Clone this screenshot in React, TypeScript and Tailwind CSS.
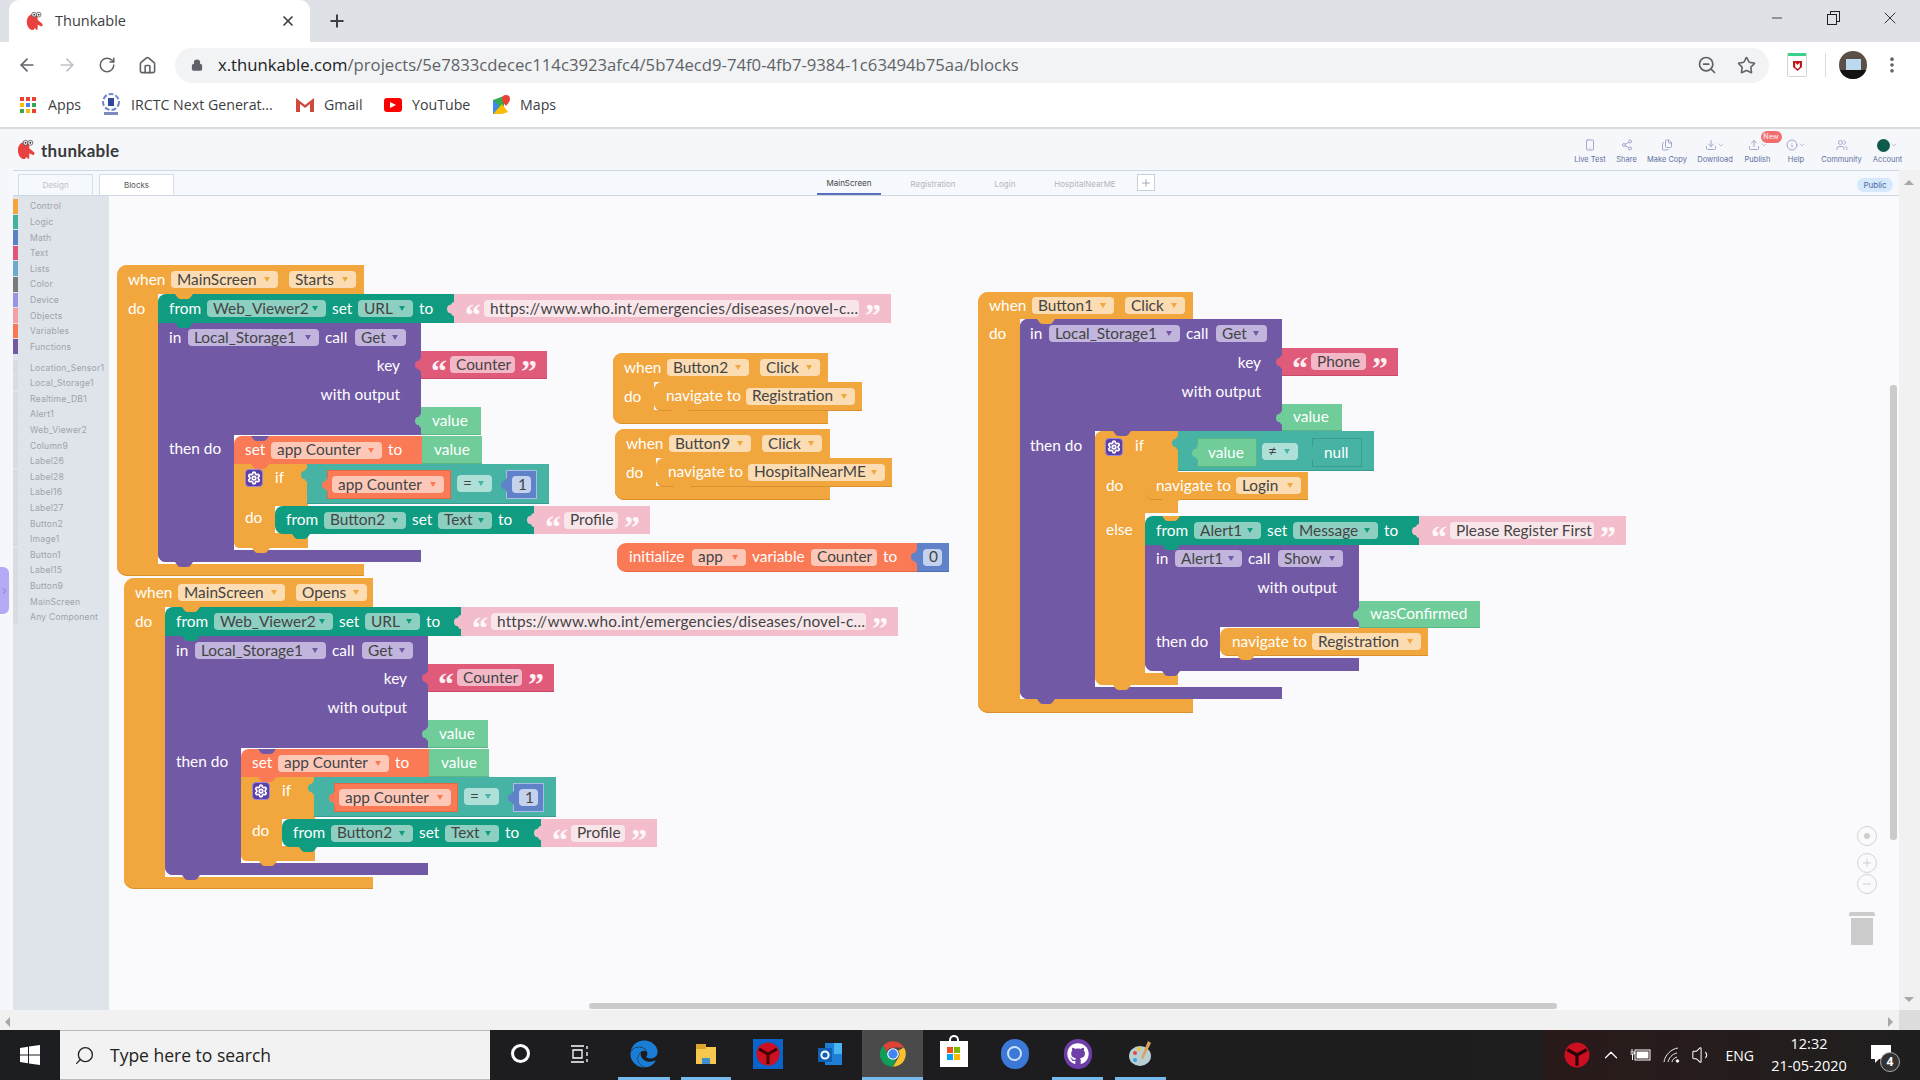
import React from "react";
import { ArrowLeft, ArrowRight, RotateCw, Home, Lock, ZoomOut, Star, X, Plus, MoreVertical, Minus, Settings, Search, ChevronUp, ChevronDown, ChevronRight, Volume1, Share2, Files, Download, Upload, Info, Users, Smartphone } from "lucide-react";
import { FaEdge, FaGithub } from "react-icons/fa";

const OR = "bg-[#f2a73e]";
const TE = "bg-[#0f9c80]";
const CO = "bg-[#46b3a5]";
const PU = "bg-[#7259a5]";
const RE = "bg-[#f97a55]";
const PK = "bg-[#f3bdcb]";
const KE = "bg-[#e05a7a]";
const GR = "bg-[#70cd9a]";
const BL = "bg-[#5f82c9]";

const tones: Record<string, { bg: string; ar: string }> = {
  orange: { bg: "bg-[#fbdcb3]", ar: "border-t-[#f2a73e]" },
  teal: { bg: "bg-[#8dd0c1]", ar: "border-t-[#0f9c80]" },
  purple: { bg: "bg-[#c1b5de]", ar: "border-t-[#7259a5]" },
  red: { bg: "bg-[#fdc8b8]", ar: "border-t-[#f97a55]" },
  lteal: { bg: "bg-[#aee0d8]", ar: "border-t-[#46b3a5]" },
  pink: { bg: "bg-[#f9e6eb]", ar: "" },
  key: { bg: "bg-[#f3b8c8]", ar: "" },
  blue: { bg: "bg-[#c5d2ee]", ar: "" },
};

const B = ({ className, children }: { className: string; children?: React.ReactNode }) => (
  <div className={`absolute flex items-center gap-[6px] whitespace-nowrap ${className}`}>{children}</div>
);
const T = ({ w, children }: { w: string; children: React.ReactNode }) => <span className={`shrink-0 ${w}`}>{children}</span>;
const L = ({ className, children }: { className: string; children: React.ReactNode }) => (
  <div className={`absolute flex h-[29px] items-center whitespace-nowrap text-white ${className}`}>{children}</div>
);
const F = ({ w, tone, children, arrow = true, extra = "" }: { w: string; tone: string; children: React.ReactNode; arrow?: boolean; extra?: string }) => (
  <span className={`flex h-[17px] shrink-0 items-center justify-between rounded-[4px] pl-[6px] pr-[8px] leading-none text-[#444] ${w} ${tones[tone].bg} ${extra}`}>
    <span>{children}</span>
    {arrow && <i className={`h-0 w-0 border-x-[3px] border-t-[5px] border-x-transparent ${tones[tone].ar}`} />}
  </span>
);
const Q = ({ c }: { c: string }) => (
  <span className="h-[17px] w-[13px] shrink-0 font-['Liberation_Serif',serif] text-[32px] font-bold leading-[30px] text-white/90">{c}</span>
);
const Tab = ({ className }: { className: string }) => (
  <svg viewBox="0 0 7 14" className={`absolute h-[14px] w-[7px] fill-current ${className}`}>
    <path d="M7 0C4 0 5 3 3 3 1 3 0 5 0 7s1 4 3 4c2 0 1 3 4 3Z" />
  </svg>
);
const Bump = ({ className }: { className: string }) => (
  <svg viewBox="0 0 18 5" className={`absolute z-10 h-[5px] w-[18px] fill-current ${className}`}>
    <path d="M0 0 3 4Q4 5 6 5H12Q14 5 15 4L18 0Z" />
  </svg>
);
const Gear = ({ className }: { className: string }) => (
  <div className={`absolute flex h-[18px] w-[18px] items-center justify-center rounded-[4px] border border-[#9a86d8] bg-[#5a3fa8] text-white ${className}`}>
    <Settings size={14} strokeWidth={3} />
  </div>
);
const Tri = ({ s, stroke }: { s: number; stroke: string }) => (
  <svg width={s} height={s} viewBox="0 0 24 24">
    <circle cx="12" cy="12" r="11.5" fill="#cc1021" />
    <path d="M12 12 3 7M12 12l9-5M12 12v10" stroke={stroke} strokeWidth="3" fill="none" />
  </svg>
);
const RL = "mt-[1px] leading-[17px]";

function FromURL() {
  return (
    <>
      <B className={`left-[337px] top-[29px] h-[29px] w-[437px] pl-[11px] ${PK}`}>
        <Q c="“" />
        <F w="w-[375px]" tone="pink" arrow={false} extra="tracking-[0.16px]">https://www.who.int/emergencies/diseases/novel-c…</F>
        <Q c="”" />
      </B>
      <B className={`left-[41px] top-[29px] h-[29px] w-[296px] rounded-tl-[8px] pl-[11px] text-white ${TE}`}>
        <T w="w-[32px]">from</T>
        <F w="w-[119px]" tone="teal">Web_Viewer2</F>
        <T w="w-[20px]">set</T>
        <F w="w-[55px]" tone="teal">URL</F>
        <T w="w-[20px]">to</T>
        <Tab className="right-0 top-[8px] text-[#f3bdcb]" />
        <Bump className="left-[17px] top-0 text-[#f2a73e]" />
        <Bump className="left-[17px] -bottom-[5px] text-[#0f9c80]" />
      </B>
    </>
  );
}

function MainBlock({ pos, hw, evt, ew }: { pos: string; hw: string; evt: string; ew: string }) {
  return (
    <div className={`absolute h-[311px] w-[780px] ${pos}`}>
      <div className={`absolute left-0 top-0 h-[311px] w-[41px] rounded-l-[10px] ${OR}`} />
      <B className={`left-0 top-0 h-[29px] rounded-tl-[10px] pl-[11px] text-white ${hw} ${OR}`}>
        <T w="w-[37px]">when</T>
        <F w="w-[107px]" tone="orange">MainScreen</F>
        <F w={ew} tone="orange" extra="ml-[5px]">{evt}</F>
      </B>
      <div className={`absolute left-0 top-[299px] h-[12px] rounded-bl-[10px] border-b border-[#d9902e] ${hw} ${OR}`} />
      <L className="left-[11px] top-[29px]">do</L>

      <div className={`absolute left-[41px] top-[58px] h-[239px] w-[76px] rounded-bl-[8px] ${PU}`} />
      <B className={`left-[41px] top-[58px] h-[112px] w-[263px] items-start pl-[11px] pt-[5px] text-white ${PU}`}>
        <T w={`w-[13px] ${RL}`}>in</T>
        <F w="w-[131px]" tone="purple" extra="mt-[1px]">Local_Storage1</F>
        <T w={`w-[24px] ${RL}`}>call</T>
        <F w="w-[51px]" tone="purple" extra="mt-[1px]">Get</F>
      </B>
      <div className={`absolute left-[41px] top-[285px] h-[12px] w-[263px] rounded-bl-[8px] ${PU}`} />
      <Bump className="left-[58px] top-[297px] text-[#7259a5]" />
      <L className="left-[41px] top-[86px] w-[242px] justify-end">key</L>
      <L className="left-[41px] top-[115px] w-[242px] justify-end">with output</L>
      <L className="left-[52px] top-[169px]">then do</L>
      <FromURL />

      <B className={`left-[304px] top-[86px] h-[28px] w-[126px] border-b border-[#c94a68] pl-[10px] ${KE}`}>
        <Tab className="-left-[6px] top-[7px] text-[#e05a7a]" />
        <Q c="“" />
        <F w="w-[65px]" tone="key" arrow={false}>Counter</F>
        <Q c="”" />
      </B>
      <B className={`left-[304px] top-[142px] h-[28px] w-[60px] border-b border-[#5cb584] pl-[11px] text-white ${GR}`}>
        <Tab className="-left-[6px] top-[7px] text-[#70cd9a]" />
        value
      </B>
      <B className={`left-[305px] top-[171px] h-[28px] w-[60px] border-b border-[#5cb584] pl-[12px] text-white ${GR}`}>
        <Tab className="-left-[6px] top-[7px] text-[#70cd9a]" />
        value
      </B>

      <div className={`absolute left-[117px] top-[198px] h-[85px] w-[41px] rounded-bl-[6px] ${OR}`} />
      <div className={`absolute left-[117px] top-[198px] h-[43px] w-[74px] ${OR}`} />
      <div className={`absolute left-[117px] top-[268px] h-[15px] w-[74px] rounded-bl-[6px] ${OR}`} />
      <Bump className="left-[135px] top-[283px] text-[#f2a73e]" />
      <B className={`left-[117px] top-[171px] h-[28px] w-[188px] rounded-tl-[8px] pl-[11px] text-white ${RE}`}>
        <T w="w-[20px]">set</T>
        <F w="w-[111px]" tone="red">app Counter</F>
        <T w="w-[20px]">to</T>
        <Bump className="left-[17px] top-0 text-[#7259a5]" />
        <Bump className="left-[17px] -bottom-[5px] text-[#f97a55]" />
      </B>
      <Gear className="left-[128px] top-[204px]" />
      <L className="left-[158px] top-[198px]">if</L>
      <L className="left-[128px] top-[238px]">do</L>

      <div className={`absolute left-[190px] top-[199px] h-[40px] w-[242px] border-b border-[#3a9c90] ${CO}`}>
        <Tab className="-left-[6px] top-[4px] text-[#46b3a5]" />
      </div>
      <B className={`left-[210px] top-[205px] h-[29px] w-[124px] border border-[#e2683f] pl-[4px] ${RE}`}>
        <Tab className="-left-[6px] top-[7px] text-[#f97a55]" />
        <F w="w-[112px]" tone="red">app Counter</F>
      </B>
      <B className="left-[340px] top-[210px] h-[17px]">
        <F w="w-[35px]" tone="lteal">=</F>
      </B>
      <B className={`left-[389px] top-[205px] h-[29px] w-[31px] border border-[#a8bce4] pl-[5px] ${BL}`}>
        <Tab className="-left-[6px] top-[7px] text-[#5f82c9]" />
        <F w="w-[19px]" tone="blue" arrow={false}>1</F>
      </B>

      <B className={`left-[417px] top-[241px] h-[28px] w-[116px] pl-[11px] ${PK}`}>
        <Q c="“" />
        <F w="w-[54px]" tone="pink" arrow={false}>Profile</F>
        <Q c="”" />
      </B>
      <B className={`left-[158px] top-[241px] h-[28px] w-[259px] rounded-l-[8px] pl-[11px] text-white ${TE}`}>
        <T w="w-[32px]">from</T>
        <F w="w-[82px]" tone="teal">Button2</F>
        <T w="w-[20px]">set</T>
        <F w="w-[54px]" tone="teal">Text</F>
        <T w="w-[20px]">to</T>
        <Tab className="right-0 top-[7px] text-[#f3bdcb]" />
        <Bump className="left-[17px] -bottom-[5px] text-[#0f9c80]" />
      </B>
    </div>
  );
}

function NavBlock({ pos, btn, pw, page, nw, bp, cp }: { pos: string; btn: string; pw: string; page: string; nw: string; bp: string; cp: string }) {
  return (
    <div className={`absolute h-[71px] w-[300px] ${pos}`}>
      <div className={`absolute left-0 top-0 h-[71px] w-[41px] rounded-l-[9px] ${OR}`} />
      <B className={`left-0 top-0 h-[29px] w-[215px] rounded-tl-[9px] pl-[11px] text-white ${OR}`}>
        <T w="w-[37px]">when</T>
        <F w={bp} tone="orange">{btn}</F>
        <F w={cp} tone="orange" extra="ml-[5px]">Click</F>
      </B>
      <L className="left-[11px] top-[29px]">do</L>
      <div className={`absolute left-0 top-[57px] h-[14px] w-[215px] rounded-bl-[9px] border-b border-[#d9902e] ${OR}`} />
      <B className={`left-[41px] top-[29px] h-[29px] rounded-l-[8px] border-b border-[#d9902e] pl-[12px] text-white ${nw} ${OR}`}>
        <T w="w-[74px]">navigate to</T>
        <F w={pw} tone="orange">{page}</F>
        <Bump className="left-[17px] -bottom-[5px] text-[#f2a73e]" />
      </B>
    </div>
  );
}

function ButtonOne() {
  return (
    <div className="absolute left-[869px] top-[96px] h-[421px] w-[650px]">
      <div className={`absolute left-0 top-0 h-[421px] w-[42px] rounded-l-[10px] ${OR}`} />
      <B className={`left-0 top-0 h-[27px] w-[215px] rounded-tl-[10px] pl-[11px] text-white ${OR}`}>
        <T w="w-[37px]">when</T>
        <F w="w-[82px]" tone="orange">Button1</F>
        <F w="w-[60px]" tone="orange" extra="ml-[5px]">Click</F>
      </B>
      <div className={`absolute left-0 top-[407px] h-[14px] w-[215px] rounded-bl-[10px] border-b border-[#d9902e] ${OR}`} />
      <L className="left-[11px] top-[27px]">do</L>

      <div className={`absolute left-[42px] top-[27px] h-[380px] w-[75px] rounded-l-[8px] ${PU}`} />
      <B className={`left-[42px] top-[27px] h-[112px] w-[262px] items-start rounded-tl-[8px] pl-[10px] pt-[5px] text-white ${PU}`}>
        <T w={`w-[13px] ${RL}`}>in</T>
        <F w="w-[131px]" tone="purple" extra="mt-[1px]">Local_Storage1</F>
        <T w={`w-[24px] ${RL}`}>call</T>
        <F w="w-[51px]" tone="purple" extra="mt-[1px]">Get</F>
        <Bump className="left-[17px] top-0 text-[#f2a73e]" />
      </B>
      <div className={`absolute left-[42px] top-[395px] h-[12px] w-[262px] rounded-bl-[8px] ${PU}`} />
      <Bump className="left-[59px] top-[407px] text-[#7259a5]" />
      <L className="left-[42px] top-[56px] w-[241px] justify-end">key</L>
      <L className="left-[42px] top-[85px] w-[241px] justify-end">with output</L>
      <L className="left-[52px] top-[139px]">then do</L>

      <B className={`left-[304px] top-[56px] h-[28px] w-[116px] border-b border-[#c94a68] pl-[10px] ${KE}`}>
        <Tab className="-left-[6px] top-[7px] text-[#e05a7a]" />
        <Q c="“" />
        <F w="w-[55px]" tone="key" arrow={false}>Phone</F>
        <Q c="”" />
      </B>
      <B className={`left-[304px] top-[112px] h-[27px] w-[60px] border-b border-[#5cb584] pl-[11px] text-white ${GR}`}>
        <Tab className="-left-[6px] top-[7px] text-[#70cd9a]" />
        value
      </B>

      <div className={`absolute left-[117px] top-[139px] h-[254px] w-[50px] rounded-l-[8px] ${OR}`} />
      <div className={`absolute left-[117px] top-[139px] h-[82px] w-[83px] rounded-tl-[8px] ${OR}`} />
      <div className={`absolute left-[117px] top-[381px] h-[12px] w-[83px] rounded-bl-[8px] ${OR}`} />
      <Bump className="left-[135px] top-[139px] text-[#7259a5]" />
      <Bump className="left-[135px] top-[393px] text-[#f2a73e]" />
      <Gear className="left-[127px] top-[146px]" />
      <L className="left-[157px] top-[139px]">if</L>
      <L className="left-[128px] top-[179px]">do</L>
      <L className="left-[128px] top-[223px]">else</L>

      <div className={`absolute left-[200px] top-[139px] h-[40px] w-[196px] border-b border-[#3a9c90] ${CO}`}>
        <Tab className="-left-[6px] top-[5px] text-[#46b3a5]" />
      </div>
      <B className={`left-[219px] top-[146px] h-[29px] w-[60px] border border-[#5cb584] pl-[10px] text-white ${GR}`}>
        <Tab className="-left-[6px] top-[7px] text-[#70cd9a]" />
        value
      </B>
      <B className="left-[284px] top-[151px] h-[17px]">
        <F w="w-[36px]" tone="lteal">≠</F>
      </B>
      <B className={`left-[334px] top-[146px] h-[29px] w-[50px] border border-[#3a9c90] pl-[11px] text-white ${CO}`}>
        <Tab className="-left-[6px] top-[7px] text-[#46b3a5]" />
        null
      </B>

      <B className={`left-[167px] top-[180px] h-[28px] w-[163px] rounded-l-[8px] border-b border-[#d9902e] pl-[11px] text-white ${OR}`}>
        <T w="w-[74px]">navigate to</T>
        <F w="w-[65px]" tone="orange">Login</F>
        <Bump className="left-[17px] -bottom-[5px] text-[#f2a73e]" />
      </B>

      <div className={`absolute left-[167px] top-[253px] h-[126px] w-[75px] rounded-bl-[8px] ${PU}`} />
      <B className={`left-[167px] top-[253px] h-[82px] w-[214px] items-start pl-[11px] pt-[4px] text-white ${PU}`}>
        <T w={`w-[13px] ${RL}`}>in</T>
        <F w="w-[67px]" tone="purple" extra="mt-[1px]">Alert1</F>
        <T w={`w-[24px] ${RL}`}>call</T>
        <F w="w-[65px]" tone="purple" extra="mt-[1px]">Show</F>
      </B>
      <div className={`absolute left-[167px] top-[366px] h-[13px] w-[214px] rounded-bl-[8px] ${PU}`} />
      <Bump className="left-[184px] top-[379px] text-[#7259a5]" />
      <L className="left-[167px] top-[281px] w-[192px] justify-end">with output</L>
      <L className="left-[178px] top-[335px]">then do</L>

      <B className={`left-[441px] top-[224px] h-[29px] w-[207px] pl-[12px] ${PK}`}>
        <Q c="“" />
        <F w="w-[144px]" tone="pink" arrow={false}>Please Register First</F>
        <Q c="”" />
      </B>
      <B className={`left-[167px] top-[224px] h-[29px] w-[274px] rounded-tl-[8px] pl-[11px] text-white ${TE}`}>
        <T w="w-[32px]">from</T>
        <F w="w-[67px]" tone="teal">Alert1</F>
        <T w="w-[20px]">set</T>
        <F w="w-[85px]" tone="teal">Message</F>
        <T w="w-[20px]">to</T>
        <Tab className="right-0 top-[8px] text-[#f3bdcb]" />
        <Bump className="left-[17px] top-0 text-[#f2a73e]" />
        <Bump className="left-[17px] -bottom-[5px] text-[#0f9c80]" />
      </B>
      <B className={`left-[381px] top-[309px] h-[27px] w-[121px] border-b border-[#5cb584] pl-[11px] text-white ${GR}`}>
        <Tab className="-left-[6px] top-[7px] text-[#70cd9a]" />
        wasConfirmed
      </B>
      <B className={`left-[242px] top-[336px] h-[28px] w-[208px] rounded-l-[8px] border-b border-[#d9902e] pl-[12px] text-white ${OR}`}>
        <T w="w-[74px]">navigate to</T>
        <F w="w-[109px]" tone="orange">Registration</F>
        <Bump className="left-[17px] -bottom-[5px] text-[#f2a73e]" />
      </B>
    </div>
  );
}

const cats: [string, string][] = [
  ["Control", "bg-[#f2a63b]"], ["Logic", "bg-[#3fb39d]"], ["Math", "bg-[#5b80c6]"], ["Text", "bg-[#e0567a]"], ["Lists", "bg-[#6cacc8]"],
  ["Color", "bg-[#7a7a7a]"], ["Device", "bg-[#9a94e6]"], ["Objects", "bg-[#f59fa4]"], ["Variables", "bg-[#fa7850]"], ["Functions", "bg-[#7358a4]"],
];
const comps = ["Location_Sensor1", "Local_Storage1", "Realtime_DB1", "Alert1", "Web_Viewer2", "Column9", "Label26", "Label28", "Label16", "Label27", "Button2", "Image1", "Button1", "Label15", "Button9", "MainScreen", "Any Component"];

function Side() {
  const row = (name: string, sw: string) => (
    <div key={name} className="flex h-[15.6px] items-center">
      <div className={`mb-[1px] h-[14.5px] w-[5px] ${sw}`} />
      <span className="ml-[12px] text-[8.6px] tracking-[0.2px] text-[#9ea3ab]">{name}</span>
    </div>
  );
  return (
    <aside className="w-[96px] shrink-0 bg-[#dfe3ea] pt-[3px] font-['Inter',sans-serif]">
      {cats.map(([n, c]) => row(n, c))}
      <div className="h-[5.4px]" />
      {comps.map((n) => row(n, "bg-[#d8dbdf]"))}
    </aside>
  );
}

const Logo = ({ s }: { s: number }) => (
  <svg width={s} height={s} viewBox="0 0 20 22">
    <path d="M9 3C4 3 1 7 1 12s3 9 7 9c1 0 1-2 2-2s1 2 2 2 1-3 1-6l4 2c1 0 2-2 1-3l-5-4c0-4-1-7-4-7Z" fill="#e8423f" />
    <circle cx="9" cy="4" r="2.6" fill="#fff" stroke="#444" strokeWidth="0.8" />
    <circle cx="14" cy="4" r="2.6" fill="#fff" stroke="#444" strokeWidth="0.8" />
    <circle cx="9" cy="4" r="1" fill="#333" />
    <circle cx="14" cy="4" r="1" fill="#333" />
  </svg>
);

function ChromeIcon({ s }: { s: number }) {
  return (
    <svg width={s} height={s} viewBox="0 0 24 24">
      <path d="M12 1a11 11 0 0 1 9.5 5.5H12a5.5 5.5 0 0 0-5.2 3.7L3.6 4.7A11 11 0 0 1 12 1Z" fill="#db4437" />
      <path d="M21.5 6.5A11 11 0 0 1 12 23l4.8-8.2A5.5 5.5 0 0 0 16.6 9Z" fill="#fbc02d" />
      <path d="M12 23A11 11 0 0 1 3.6 4.7l4.7 8.5a5.5 5.5 0 0 0 6.4 3.2Z" fill="#0f9d58" />
      <circle cx="12" cy="12" r="5" fill="#fff" />
      <circle cx="12" cy="12" r="4" fill="#4285f4" />
    </svg>
  );
}

function TabBar() {
  return (
    <div className="flex h-[42px] items-end bg-[#dee1e6]">
      <div className="ml-[9px] flex h-[42px] w-[301px] items-center rounded-t-[10px] bg-white pl-[16px] pr-[14px] text-[#3c4043]">
        <Logo s={20} />
        <span className="ml-[10px] flex-1 text-[14.5px]">Thunkable</span>
        <X size={16} strokeWidth={2.6} className="text-[#3c4043]" />
      </div>
      <div className="ml-[17px] flex h-[42px] w-[20px] items-center justify-center text-[#3c4043]">
        <Plus size={20} strokeWidth={2.4} />
      </div>
      <div className="ml-auto flex h-[36px] items-center self-start text-[#222]">
        <div className="flex w-[56px] justify-center"><Minus size={16} strokeWidth={1.2} /></div>
        <div className="relative flex w-[56px] justify-center">
          <div className="relative h-[14px] w-[13px]">
            <div className="absolute right-0 top-0 h-[11px] w-[10px] border border-[#222]" />
            <div className="absolute bottom-0 left-0 h-[11px] w-[10px] border border-[#222] bg-[#dee1e6]" />
          </div>
        </div>
        <div className="mr-[1px] flex w-[58px] justify-center"><X size={20} strokeWidth={1.1} /></div>
      </div>
    </div>
  );
}

function Toolbar() {
  return (
    <div className="flex h-[46px] items-center bg-white pl-[7px] pr-[8px]">
      <div className="flex w-[40px] justify-center text-[#5f6368]"><ArrowLeft size={20} strokeWidth={2} /></div>
      <div className="flex w-[40px] justify-center text-[#bdc1c6]"><ArrowRight size={20} strokeWidth={2} /></div>
      <div className="flex w-[40px] justify-center text-[#5f6368]"><RotateCw size={18} strokeWidth={2} /></div>
      <div className="flex w-[40px] justify-center text-[#5f6368]"><Home size={19} strokeWidth={2} /></div>
      <div className="ml-[8px] flex h-[35px] w-[1594px] items-center rounded-full bg-[#f1f3f4] pl-[16px] pr-[13px]">
        <Lock size={12} className="fill-[#5f6368] text-[#5f6368]" strokeWidth={2.5} />
        <span className="ml-[15px] flex-1 whitespace-nowrap text-[16.7px] text-[#5f6368]">
          <span className="text-[#202124]">x.thunkable.com</span>/projects/5e7833cdecec114c3923afc4/5b74ecd9-74f0-4fb7-9384-1c63494b75aa/blocks
        </span>
        <ZoomOut size={20} strokeWidth={2} className="mr-[20px] text-[#5f6368]" />
        <Star size={19} strokeWidth={2} className="text-[#5f6368]" />
      </div>
      <div className="relative ml-[18px] flex h-[24px] w-[20px] items-center justify-center rounded-[2px] border border-[#d5d5d5] border-t-[3px] border-t-[#3bcf8e] bg-white">
        <svg width="11" height="12" viewBox="0 0 11 12"><path d="M1 1h9v6l-4.5 4L1 7Z" fill="#c01818" /><path d="M3.2 2.5 5.5 5l2.3-2.5V7L5.5 9 3.2 7Z" fill="#fff" /></svg>
      </div>
      <div className="ml-[18px] h-[24px] w-px bg-[#dadce0]" />
      <div className="relative ml-[13px] h-[28px] w-[28px] overflow-hidden rounded-full bg-[#5a5048]">
        <div className="absolute left-[7px] top-[8px] h-[12px] w-[15px] bg-[#bcd9ee]" />
        <div className="absolute bottom-0 left-0 h-[9px] w-[28px] bg-[#121212]" />
      </div>
      <MoreVertical size={20} strokeWidth={2.4} className="ml-[15px] text-[#5f6368]" />
    </div>
  );
}

function Bookmarks() {
  const dots = ["#ea4335", "#ea4335", "#ea4335", "#fbbc05", "#4285f4", "#34a853", "#34a853", "#fbbc05", "#ea4335"];
  return (
    <div className="flex h-[39px] items-center whitespace-nowrap bg-white pb-[5px] text-[14.2px] text-[#3c4043]">
      <div className="ml-[20px] grid h-[16px] w-[16px] grid-cols-3 gap-[1.5px]">
        {dots.map((c, i) => <i key={i} className="block" style={{ background: c }} />)}
      </div>
      <span className="ml-[12px] w-[54px]">Apps</span>
      <svg width="18" height="24" viewBox="0 0 18 24"><circle cx="9" cy="9" r="8" fill="none" stroke="#6d86c5" strokeWidth="2" strokeDasharray="5 2" /><rect x="6" y="5" width="6" height="8" fill="#2d4a9a" /><rect x="2" y="19" width="14" height="3" fill="#7a8bc0" /></svg>
      <span className="ml-[11px] w-[164px]">IRCTC Next Generat...</span>
      <svg width="20" height="16" viewBox="0 0 20 16"><path d="M1 1v14h4V7l5 4 5-4v8h4V1l-9 7Z" fill="#cf4a3e" /></svg>
      <span className="ml-[9px] w-[60px]">Gmail</span>
      <div className="flex h-[14px] w-[18px] items-center justify-center rounded-[3px] bg-[#f00]"><i className="h-0 w-0 border-y-[3.5px] border-l-[6px] border-y-transparent border-l-white" /></div>
      <span className="ml-[10px] w-[80px]">YouTube</span>
      <svg width="18" height="22" viewBox="0 0 18 22"><path d="M1 6 12 2v14L1 20Z" fill="#34a853" /><path d="M1 20l9-10 6 8-6 2Z" fill="#fbbc05" /><path d="M1 6l6 6-6 8Z" fill="#4285f4" /><path d="M14 1a4 4 0 0 1 4 4c0 3-4 7-4 7s-4-4-4-7a4 4 0 0 1 4-4Z" fill="#ea4335" /></svg>
      <span className="ml-[10px]">Maps</span>
    </div>
  );
}

function AppHeader() {
  const ic = "text-[#9fa9cc]";
  const items: [string, React.ReactNode, string][] = [
    ["Live Test", <Smartphone key="a" size={12} className={ic} />, "w-[29px]"],
    ["Share", <Share2 key="b" size={12} className={ic} />, "w-[19px]"],
    ["Make Copy", <Files key="c" size={12} className={ic} />, "w-[37px]"],
    ["Download", <span key="d" className="flex items-center"><Download size={12} className={ic} /><ChevronDown size={8} className={ic} /></span>, "w-[34px]"],
    ["Publish", <span key="e" className="relative flex items-center"><Upload size={12} className={ic} /><ChevronDown size={8} className={ic} /><span className="absolute -right-[14px] -top-[8px] flex h-[12px] w-[21px] items-center justify-center rounded-full bg-[#f26d6d] text-[7px] font-bold text-white/70">New</span></span>, "w-[26px]"],
    ["Help", <span key="f" className="flex items-center"><Info size={12} className={ic} /><ChevronDown size={8} className={ic} /></span>, "w-[26px]"],
    ["Community", <Users key="g" size={12} className={ic} />, "w-[40px]"],
    ["Account", <span key="h" className="flex items-center"><span className="h-[13px] w-[13px] rounded-full bg-[#0f5a4a]" /><ChevronDown size={8} className={ic} /></span>, "w-[27px]"],
  ];
  return (
    <div className="flex h-[43px] items-center border-t-2 border-[#dcdcdc] bg-[#f5f7fb] pl-[16px] pr-[19px]">
      <Logo s={21} />
      <span className="ml-[4px] mt-[2px] font-['Lato',sans-serif] text-[17px] font-bold tracking-[0.3px] text-[#3a3a3a]">thunkable</span>
      <div className="ml-auto flex items-center gap-[12.5px] font-['Inter',sans-serif]">
        {items.map(([n, i, w]) => (
          <div key={n} className={`flex flex-col items-center pt-[3px] ${w}`}>
            <div className="flex h-[15px] items-center">{i}</div>
            <span className="mt-[2px] whitespace-nowrap text-[7.5px] leading-[10px] text-[#5f6f9e]">{n}</span>
          </div>
        ))}
      </div>
    </div>
  );
}

function TabRow() {
  return (
    <div className="flex h-[26px] items-end border-y border-[#cfd6e4] bg-[#f5f8fc] pl-[5px] font-['Inter',sans-serif] text-[8px]">
      <div className="flex h-[21px] w-[75px] items-center justify-center border border-b-0 border-[#d7dde8] text-[#c2c2c2]">Design</div>
      <div className="ml-[6px] flex h-[21px] w-[75px] items-center justify-center border border-b-0 border-[#d7dde8] bg-white text-[#555]">Blocks</div>
      <div className="ml-[643px] flex h-[24px] w-[64px] items-center justify-center border-b-2 border-[#5a6fbf] pt-[2px] text-[#444]">MainScreen</div>
      <div className="ml-[27px] flex h-[24px] w-[50px] items-center justify-center pt-[2px] text-[#b5b5b5]">Registration</div>
      <div className="ml-[32px] flex h-[24px] w-[30px] items-center justify-center pt-[2px] text-[#b5b5b5]">Login</div>
      <div className="ml-[35px] flex h-[24px] w-[60px] items-center justify-center whitespace-nowrap pt-[2px] text-[#b5b5b5]">HospitalNearME</div>
      <div className="mb-[4px] ml-[22px] flex h-[17px] w-[18px] items-center justify-center border border-[#c8cfdc] bg-white text-[#8d94a8]"><Plus size={12} strokeWidth={1.5} /></div>
      <div className="mb-[3px] ml-auto mr-[6px] flex h-[14px] w-[36px] items-center justify-center rounded-full bg-[#d6e8fb] text-[#4c6aa0]">Public</div>
    </div>
  );
}

function Canvas() {
  return (
    <div className="relative flex-1 overflow-hidden bg-[#fafafc] font-['Lato',sans-serif] text-[15.4px] text-white">
      <MainBlock pos="left-[8px] top-[69px]" hw="w-[247px]" evt="Starts" ew="w-[67px]" />
      <MainBlock pos="left-[15px] top-[382px]" hw="w-[249px]" evt="Opens" ew="w-[71px]" />
      <NavBlock pos="left-[504px] top-[157px]" btn="Button2" bp="w-[82px]" cp="w-[60px]" page="Registration" pw="w-[109px]" nw="w-[208px]" />
      <NavBlock pos="left-[506px] top-[233px]" btn="Button9" bp="w-[82px]" cp="w-[60px]" page="HospitalNearME" pw="w-[137px]" nw="w-[236px]" />
      <B className={`left-[508px] top-[347px] h-[29px] w-[300px] rounded-l-[9px] border-b border-[#e2683f] pl-[12px] text-white ${RE}`}>
        <T w="w-[57px]">initialize</T>
        <F w="w-[54px]" tone="red">app</F>
        <T w="w-[53px]">variable</T>
        <F w="w-[66px]" tone="red" arrow={false}>Counter</F>
        <T w="w-[20px]">to</T>
      </B>
      <B className={`left-[808px] top-[347px] h-[29px] w-[32px] border-b border-[#4f6fb0] pl-[6px] ${BL}`}>
        <Tab className="-left-[6px] top-[7px] text-[#5f82c9]" />
        <F w="w-[19px]" tone="blue" arrow={false}>0</F>
      </B>
      <ButtonOne />

      <div className="absolute left-[1781px] top-[189px] h-[455px] w-[7px] rounded-[3px] bg-[#cbcbcb]" />
      <div className="absolute left-[480px] bottom-[1px] h-[6px] w-[968px] rounded-[3px] bg-[#cbcbcb]" />

      <div className="absolute left-[1748px] top-[630px] flex h-[20px] w-[20px] items-center justify-center rounded-full border border-[#d4d4d4]"><i className="h-[6px] w-[6px] rounded-full bg-[#cfcfcf]" /></div>
      <div className="absolute left-[1748px] top-[657px] flex h-[20px] w-[20px] items-center justify-center rounded-full border border-[#d4d4d4] text-[#cfcfcf]"><Plus size={12} /></div>
      <div className="absolute left-[1748px] top-[678px] flex h-[20px] w-[20px] items-center justify-center rounded-full border border-[#d4d4d4] text-[#cfcfcf]"><Minus size={12} /></div>
      <div className="absolute left-[1740px] top-[716px] h-[4px] w-[26px] rounded-t-[2px] bg-[#cbcbcb]" />
      <div className="absolute left-[1742px] top-[722px] h-[27px] w-[22px] rounded-b-[1px] bg-[#cbcbcb]" />
    </div>
  );
}

function Taskbar() {
  const Slot = ({ w = "w-[62px]", on = false, hi = false, children }: { w?: string; on?: boolean; hi?: boolean; children: React.ReactNode }) => (
    <div className={`flex h-[50px] shrink-0 items-center justify-center border-b-[3px] ${w} ${on ? "border-[#76b9ed]" : "border-transparent"} ${hi ? "bg-[#4a4a4a]" : ""}`}>{children}</div>
  );
  return (
    <div className="flex h-[50px] items-center bg-gradient-to-r from-[#1c1e22] via-[#1d1c1e] to-[#1f1f1f] font-['Open_Sans',sans-serif] text-white">
      <div className="flex w-[60px] justify-center">
        <svg width="20" height="20" viewBox="0 0 20 20" fill="#fff"><path d="M0 3l8-1.2V9.5H0ZM9 1.6 20 0v9.5H9ZM0 10.5h8v7.7L0 17ZM9 10.5h11V20L9 18.4Z" /></svg>
      </div>
      <div className="flex h-[50px] w-[430px] items-center border-y border-[#bcbcbc] bg-[#f2f2f2] pl-[14px] text-[#222]">
        <Search size={21} strokeWidth={1.5} className="-scale-x-100" />
        <span className="ml-[15px] text-[17.5px]">Type here to search</span>
      </div>
      <div className="flex items-center">
        <Slot w="w-[60px]"><i className="h-[19px] w-[19px] rounded-full border-[3px] border-white" /></Slot>
        <Slot w="w-[60px]">
          <svg width="20" height="20" viewBox="0 0 20 20" fill="none" stroke="#fff" strokeWidth="1.3"><path d="M1 2h13M1 18h13M3 6h9v8H3ZM17 2v3M17 8v4M17 15v3" /></svg>
        </Slot>
        <div className="w-[8px]" />
        <Slot w="w-[52px]" on><FaEdge size={28} className="text-[#1a7ed6]" /></Slot>
        <div className="w-[11px]" />
        <Slot w="w-[50px]" on>
          <svg width="26" height="26" viewBox="0 0 26 26"><path d="M3 3h8l2 3h10v17H3Z" fill="#f6c94e" /><rect x="3" y="3" width="10" height="5" fill="#dca62e" /><rect x="9" y="17" width="8" height="6" fill="#3f8fd1" /></svg>
        </Slot>
        <div className="w-[12px]" />
        <Slot w="w-[50px]"><div className="flex h-[30px] w-[30px] items-center justify-center bg-[#0a63c9]"><Tri s={24} stroke="#400" /></div></Slot>
        <div className="w-[12px]" />
        <Slot w="w-[50px]">
          <svg width="28" height="28" viewBox="0 0 28 28"><path d="M9 3h17v22H9Z" fill="#1f7fd6" /><path d="M18 3h8v11h-8Z" fill="#49b5f2" /><rect x="2" y="8" width="14" height="14" fill="#0f5fb3" /><circle cx="9" cy="15" r="3.6" fill="none" stroke="#fff" strokeWidth="2" /></svg>
        </Slot>
        <div className="w-[7px]" />
        <Slot w="w-[61px]" on hi><ChromeIcon s={28} /></Slot>
        <Slot w="w-[61px]">
          <div className="relative flex h-[26px] w-[28px] items-center justify-center bg-white">
            <div className="grid h-[13px] w-[13px] grid-cols-2 gap-px">
              <i className="bg-[#f25022]" /><i className="bg-[#7fba00]" /><i className="bg-[#00a4ef]" /><i className="bg-[#ffb900]" />
            </div>
            <div className="absolute -top-[6px] h-[7px] w-[10px] rounded-t-full border-2 border-b-0 border-white" />
          </div>
        </Slot>
        <Slot w="w-[61px]"><div className="flex h-[30px] w-[28px] items-center justify-center rounded-full bg-[#3b78d8]"><i className="h-[15px] w-[15px] rounded-full border-2 border-[#cfe0f8]" /></div></Slot>
        <div className="w-[7px]" />
        <Slot w="w-[51px]" on><div className="flex h-[30px] w-[28px] items-center justify-center rounded-full bg-[#6e3fa8]"><FaGithub size={22} /></div></Slot>
        <div className="w-[12px]" />
        <Slot w="w-[51px]" on>
          <svg width="30" height="30" viewBox="0 0 30 30"><ellipse cx="14" cy="17" rx="11" ry="10" fill="#b9cfd6" /><circle cx="9" cy="14" r="2" fill="#e4483d" /><circle cx="13" cy="10" r="2" fill="#f2c230" /><circle cx="9" cy="21" r="2" fill="#39a0dc" /><path d="M22 2 25 4 17 20 15 19Z" fill="#d9a35b" /></svg>
        </Slot>
      </div>
      <div className="ml-auto flex h-[50px] items-center bg-gradient-to-r from-[#2a1a1a] to-[#1f1f1f] pr-[6px]">
        <div className="ml-[20px]"><Tri s={26} stroke="#2a0508" /></div>
        <ChevronUp size={22} strokeWidth={1.3} className="ml-[10px]" />
        <svg width="22" height="14" viewBox="0 0 22 14" fill="none" stroke="#fff" className="ml-[8px]"><rect x="5" y="2" width="15" height="10" /><rect x="7" y="4" width="11" height="6" fill="#fff" /><path d="M2 1v3M0.5 4h4v2h-4M2.5 6v6" /></svg>
        <svg width="18" height="16" viewBox="0 0 18 16" fill="none" stroke="#fff" strokeWidth="0.9" className="ml-[11px]"><path d="M1 15C2 8 8 2 15 1M5 15c1-4 4-8 9-9M9 15c0-2 2-4 5-5" /><circle cx="14.5" cy="14" r="1.3" fill="#fff" /></svg>
        <Volume1 size={22} strokeWidth={1.1} className="ml-[10px]" />
        <span className="ml-[13px] text-[14px]">ENG</span>
        <div className="ml-[15px] flex w-[80px] flex-col items-center text-[14.5px] leading-[22px]">
          <span>12:32</span>
          <span className="whitespace-nowrap">21-05-2020</span>
        </div>
        <div className="relative ml-[21px] mr-[22px] h-[22px] w-[22px]">
          <svg width="22" height="20" viewBox="0 0 22 20" fill="#fff"><path d="M1 1h20v14H9l-4 4v-4H1Z" /></svg>
          <span className="absolute -bottom-[6px] -right-[8px] flex h-[20px] w-[20px] items-center justify-center rounded-full border border-[#aaa] bg-[#333] text-[12px] font-bold">4</span>
        </div>
      </div>
    </div>
  );
}

export default function App() {
  return (
    <div className="flex h-[1080px] w-[1920px] flex-col overflow-hidden bg-white font-['Open_Sans',sans-serif]">
      <TabBar />
      <Toolbar />
      <Bookmarks />
      <AppHeader />
      <div className="flex h-[860px] flex-col bg-[#f6f7fa]">
        <div className="relative flex flex-1">
          <div className="w-[13px] shrink-0">
            <div className="absolute left-0 top-[397px] flex h-[47px] w-[9px] items-center justify-center rounded-r-[6px] bg-[#b3a9f5] text-[#6d6d9a]"><ChevronRight size={10} /></div>
          </div>
          <div className="flex w-[1886px] flex-col">
            <TabRow />
            <div className="flex flex-1">
              <Side />
              <Canvas />
            </div>
          </div>
          <div className="relative w-[21px] bg-[#f1f1f1]">
            <i className="absolute left-[5px] top-[10px] h-0 w-0 border-x-[5px] border-b-[5px] border-x-transparent border-b-[#a8a8a8]" />
            <i className="absolute bottom-[8px] left-[5px] h-0 w-0 border-x-[5px] border-t-[5px] border-x-transparent border-t-[#a8a8a8]" />
          </div>
        </div>
        <div className="relative flex h-[20px] bg-[#f1f1f1]">
          <i className="absolute left-[5px] top-[7px] h-0 w-0 border-y-[5px] border-r-[5px] border-y-transparent border-r-[#a8a8a8]" />
          <i className="absolute right-[27px] top-[7px] h-0 w-0 border-y-[5px] border-l-[5px] border-y-transparent border-l-[#a8a8a8]" />
          <div className="ml-auto w-[21px] bg-[#dcdcdc]" />
        </div>
      </div>
      <Taskbar />
    </div>
  );
}
